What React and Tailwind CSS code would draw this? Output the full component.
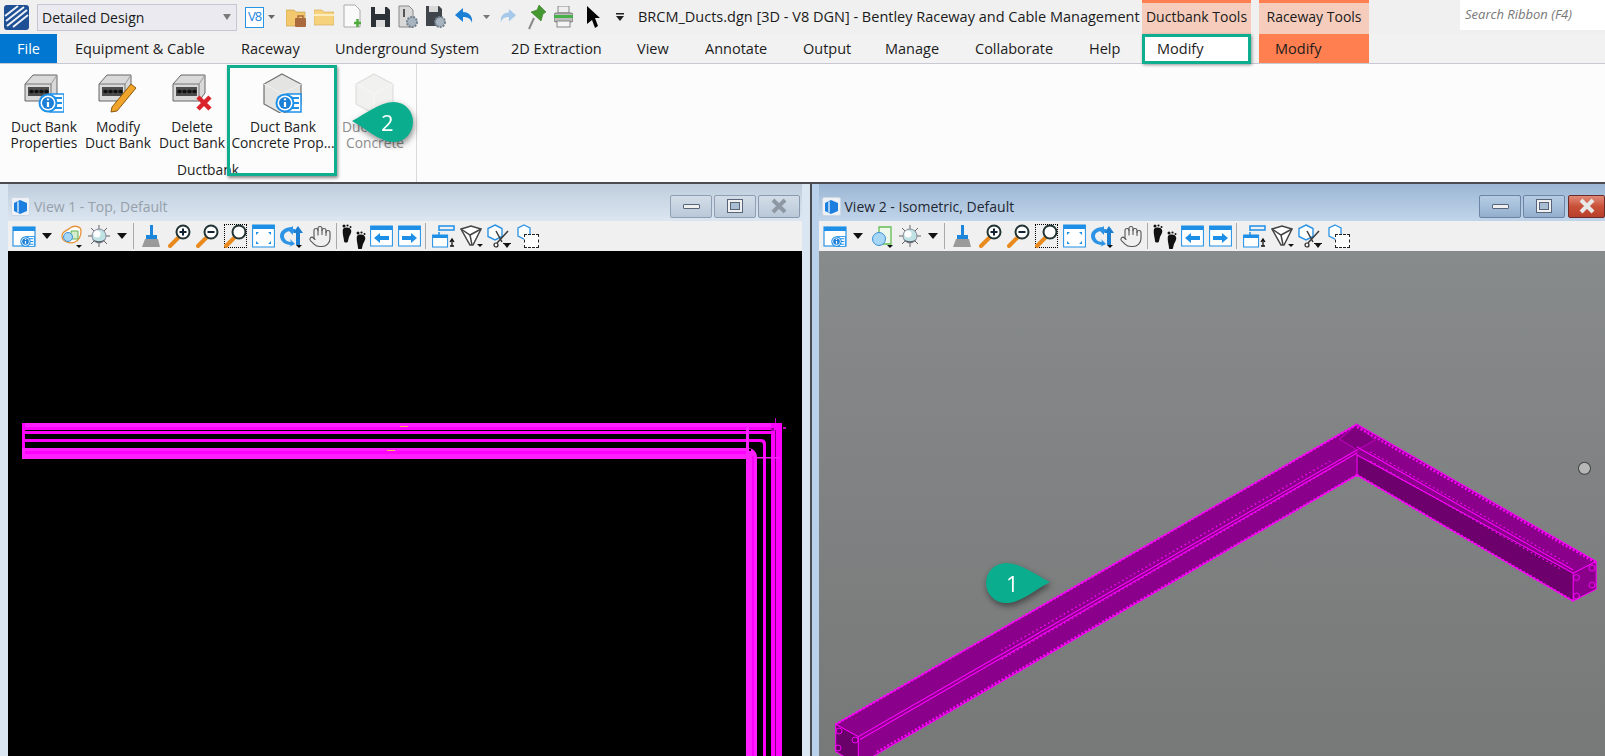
import { Hand } from 'lucide-react';

const font = "font-['Open_Sans','Noto_Sans',sans-serif]";

const S = ({ c, vb = '0 0 24 24', children }) => (
  <svg className={`shrink-0 ${c}`} viewBox={vb}>{children}</svg>
);

const Arrow = ({ c, fill = '#111' }) => (
  <S c={`h-[8px] ${c}`} vb="0 0 10 6"><path d="M0 0h10L5 6z" fill={fill} /></S>
);

const Sep = ({ c }) => <div className={`h-[26px] w-px shrink-0 bg-[#a9a9a9] ${c}`} />;

const InfoBadge = ({ x = 0, y = 0 }) => (
  <g transform={`translate(${x} ${y})`}>
    <rect x="12" y="1" width="14" height="18" fill="#fff" stroke="#1e90e8" strokeWidth="1.5" />
    <path d="M17 5h7M17 10h7M17 15h7" stroke="#1e90e8" strokeWidth="2" />
    <circle cx="10" cy="10" r="9.5" fill="#1e90e8" />
    <circle cx="10" cy="10" r="7.5" fill="#fff" />
    <circle cx="10" cy="10" r="6" fill="#1d7fd6" />
    <path d="M10 5.5v1.8M10 9v5" stroke="#fff" strokeWidth="2.2" />
  </g>
);

const DuctBox = () => (
  <g>
    <path d="M1 11 9 2h24v18l-6 8H1z" fill="#d9d9d9" stroke="#666" strokeWidth="1" />
    <path d="M1 11h26v17" fill="none" stroke="#777" strokeWidth="1" />
    <path d="M27 11l6-9" stroke="#999" strokeWidth="1" />
    <rect x="4" y="14" width="21" height="9" fill="#4c4c4c" />
    <path d="M7 18.500h1M12 18.500h1M17 18.500h1M22 18.500h1" stroke="#111" strokeWidth="3.500" strokeLinecap="round" />
  </g>
);

const Hexagon = ({ light }) => (
  <g opacity={light ? 0.45 : 1}>
    <path d="M19 1 38 11v20L19 41 1 31V11z" fill="#e4e4e2" stroke={light ? '#bbb' : '#6f6f6f'} strokeWidth="1.200" />
    <path d="M1 11l18 10 19-10M19 21v20" fill="none" stroke="#f2f2f2" strokeWidth="1" />
  </g>
);

const RibbonBtn = ({ c, icon, lines, muted }) => (
  <div className={`flex shrink-0 flex-col items-center ${c}`}>
    <div className="h-[40px] w-[40px]">{icon}</div>
    <div className={`mt-[6px] whitespace-nowrap text-center text-[13.8px] leading-[16px] ${muted ? 'text-[#8d8d8d]' : 'text-[#1c1c1c]'}`}>
      <div>{lines[0]}</div>
      <div>{lines[1]}</div>
    </div>
  </div>
);

const tabs = [
  ['Equipment & Cable', 'w-[166px]'],
  ['Raceway', 'w-[94px]'],
  ['Underground System', 'w-[176px]'],
  ['2D Extraction', 'w-[126px]'],
  ['View', 'w-[68px]'],
  ['Annotate', 'w-[98px]'],
  ['Output', 'w-[82px]'],
  ['Manage', 'w-[90px]'],
  ['Collaborate', 'w-[114px]'],
  ['Help', 'w-[71px]'],
];

const WinBtn = ({ active, kind, c }) => {
  if (kind === 'close') {
    return (
      <div className={`flex h-[23px] shrink-0 items-center justify-center rounded-[2px] border ${active ? 'border-[#6d2a2a] bg-gradient-to-b from-[#e08a78] via-[#c95038] to-[#b8402a]' : 'border-[#8a9bb0] bg-gradient-to-b from-[#d3dde8] to-[#b9c8d8]'} ${c}`}>
        <svg className="h-[16px] w-[18px]" viewBox="0 0 18 16">
          <path d="M3 2l12 12M15 2 3 14" stroke={active ? '#e8e8e8' : '#8e98a3'} strokeWidth="4" />
        </svg>
      </div>
    );
  }
  return (
    <div className={`flex h-[23px] w-[42px] shrink-0 items-center justify-center rounded-[2px] border ${active ? 'border-[#6d85a5] bg-gradient-to-b from-[#b6cce3] via-[#a5bfdb] to-[#93aecb]' : 'border-[#8fa0b4] bg-gradient-to-b from-[#d3dde8] to-[#b9c8d8]'} ${c}`}>
      {kind === 'min' ? (
        <div className="h-[5px] w-[17px] rounded-[1px] border border-[#56657a] bg-[#f0f0f0]" />
      ) : (
        <div className="h-[14px] w-[16px] border border-[#56657a] bg-[#f0f0f0] p-[2px]"><div className="h-full w-full border border-[#56657a] bg-[#a9bdd3]" /></div>
      )}
    </div>
  );
};

const Zoom = ({ c, mark }) => (
  <S c={`h-[24px] w-[23px] ${c}`} vb="0 0 23 24">
    <path d="M2 22 10 14" stroke="#e88a1e" strokeWidth="4" strokeLinecap="round" />
    <circle cx="15" cy="8" r="6.500" fill="#fff" stroke="#233" strokeWidth="2" />
    {mark === 'plus' && <path d="M11.500 8h7M15 4.500v7" stroke="#123" strokeWidth="2" />}
    {mark === 'minus' && <path d="M11.500 8h7" stroke="#123" strokeWidth="2" />}
  </S>
);

const WinIcon = () => (
  <>
    <rect x="1" y="3" width="22" height="19" fill="#fff" stroke="#2b93e4" strokeWidth="1.200" />
    <rect x="1" y="3" width="22" height="4" fill="#1d8fe6" />
  </>
);

const Foot = ({ x, y, s = 1 }) => (
  <g transform={`translate(${x} ${y}) scale(${s})`} fill="#111">
    <path d="M2 5c2-2 7-2 8 1 1 2-1 5-2 7l-1 4c0 2-4 2-4 0 0-3-2-8-1-12z" />
    <circle cx="3" cy="2" r="1.500" />
    <circle cx="6.500" cy="1.500" r="1.100" />
    <circle cx="9.500" cy="3" r="1" />
  </g>
);

const ViewToolbar = ({ second }) => (
  <div className="flex h-[30px] items-center bg-[#f0f0f0] pl-[4px]">
    <S c="h-[24px] w-[24px]"><WinIcon /><g transform="translate(8 12) scale(.55)"><InfoBadge /></g></S>
    <Arrow c="ml-[6px] w-[10px]" />
    <S c="ml-[7px] h-[24px] w-[24px]">
      {second ? (
        <>
          <path d="M9 3h12v17H9z" fill="#eef8ea" stroke="#66bb55" strokeWidth="1.300" />
          <circle cx="9" cy="15" r="6.500" fill="#a8d6f5" stroke="#3c93d8" />
        </>
      ) : (
        <>
          <path d="M3 12c0-5 5-5 8-8 4-3 11-2 11 3 0 6-2 9-6 11-5 2-13 0-13-6z" fill="#fff" stroke="#e8923a" strokeWidth="1.300" />
          <path d="M12 7h7v8h-7z" fill="#d5eecd" stroke="#65b353" />
          <circle cx="9" cy="13" r="4.500" fill="#a8d6f5" stroke="#3c93d8" />
        </>
      )}
      <path d="M17 21h6l-3 3z" fill="#111" />
    </S>
    <S c="ml-[4px] h-[24px] w-[24px]">
      <path d="M12 1v22M1 12h22M4 4l16 16M20 4 4 20" stroke="#666" strokeWidth="1" />
      <circle cx="12" cy="12" r="7" fill="#bfe3e4" stroke="#889" />
      <circle cx="10" cy="10" r="3.500" fill="#fff" />
      <path d="M6 15c3 3 9 3 12 0-2 5-10 5-12 0z" fill="#565a66" />
    </S>
    <Arrow c="ml-[6px] w-[10px]" />
    <Sep c="ml-[6px]" />
    <S c="ml-[7px] h-[24px] w-[20px]" vb="0 0 20 24">
      <path d="M9 1h3v10h4v4H5v-4h4z" fill="#1c85dc" />
      <path d="M4 15h13l2 8H1z" fill="#9a9a9a" />
    </S>
    <Zoom c="ml-[7px]" mark="plus" />
    <Zoom c="ml-[5px]" mark="minus" />
    <div className="relative ml-[5px] h-[24px] w-[23px] shrink-0 border border-dotted border-black">
      <Zoom c="-ml-px -mt-px" />
    </div>
    <S c="ml-[5px] h-[24px] w-[23px]" vb="0 0 23 24">
      <rect x=".6" y="1" width="21.800" height="22" fill="#fff" stroke="#1d8fe6" />
      <rect x=".6" y="1" width="21.800" height="4" fill="#1d8fe6" />
      <path d="M4 8h3L4 11zM19 8h-3l3 3zM4 20h3l-3-3zM19 20h-3l3-3z" fill="#1d8fe6" />
    </S>
    <S c="ml-[4px] h-[24px] w-[24px]">
      <path d="M13 3C6 3 1 7 1 12c0 5 5 9 11 9l-2 2 6-3-5-5 1 3c-4 0-7-3-7-6s3-5 8-5z" fill="#2c93e6" />
      <path d="M9 6l5-4v3h2v3h-2v3z" fill="#2c93e6" />
      <path d="M19 2l5 7h-3v12h-4V9h-3z" fill="#1c7fd2" />
      <path d="M17 21h6l-3 3z" fill="#111" />
    </S>
    <Hand className="ml-[5px] h-[25px] w-[24px] -mr-[2px] shrink-0 text-[#555]" strokeWidth={1.100} />
    <Sep c="ml-[6px]" />
    <S c="ml-[4px] h-[26px] w-[25px]" vb="0 0 25 26">
      <Foot x="0" y="1" s="1" />
      <Foot x="14" y="8" s="1" />
    </S>
    <S c="ml-[4px] h-[24px] w-[23px]" vb="0 0 23 24">
      <rect x=".6" y="2" width="21.800" height="20" fill="#fff" stroke="#1d8fe6" />
      <rect x=".6" y="2" width="21.800" height="4" fill="#1d8fe6" />
      <path d="M4 14l6-5v3h9v4h-9v3z" fill="#1d8fe6" />
    </S>
    <S c="ml-[5px] h-[24px] w-[23px]" vb="0 0 23 24">
      <rect x=".6" y="2" width="21.800" height="20" fill="#fff" stroke="#1d8fe6" />
      <rect x=".6" y="2" width="21.800" height="4" fill="#1d8fe6" />
      <path d="M19 14l-6-5v3H4v4h9v3z" fill="#1d8fe6" />
    </S>
    <Sep c="ml-[4px]" />
    <S c="ml-[6px] h-[24px] w-[23px]" vb="0 0 23 24">
      <path d="M7 7V2h15v4H7zM7 8v3" fill="none" stroke="#1d8fe6" strokeWidth="1.500" />
      <rect x=".6" y="11" width="15" height="12" fill="#fff" stroke="#1d8fe6" />
      <rect x=".6" y="11" width="15" height="3" fill="#1d8fe6" />
      <path d="M18 22h4M20 22v-6M18 18l2-3 2 3" stroke="#111" fill="none" strokeWidth="1.300" />
    </S>
    <S c="ml-[5px] h-[24px] w-[24px]">
      <path d="M1 5l10-3 10 3-8 16h-3z" fill="#fff" stroke="#444" strokeWidth="1.500" />
      <path d="M1 5l9 6 11-6M10 11l2 10" fill="none" stroke="#444" strokeWidth="1.500" />
      <path d="M17 20h6l-3 3z" fill="#111" />
    </S>
    <S c="ml-[3px] h-[24px] w-[25px]" vb="0 0 25 24">
      <path d="M8 1l7 3.500v8L8 16l-7-3.500v-8z" fill="#fff" stroke="#2b93e4" strokeWidth="1.400" />
      <path d="M9 7l6 11M21 7 10 19" stroke="#3a3a3a" strokeWidth="1.500" fill="none" />
      <circle cx="9" cy="21" r="2" fill="#fff" stroke="#222" strokeWidth="1.200" />
      <path d="M16 19h8v1h-1l-3 4-3-4h-1z" fill="#111" />
    </S>
    <div className="relative ml-[4px] h-[24px] w-[23px] shrink-0">
      <S c="h-[16px] w-[16px]" vb="0 0 16 16"><path d="M8 1l6 3v8l-6 3-6-3V4z" fill="#fff" stroke="#2b93e4" strokeWidth="1.300" /></S>
      <div className="absolute bottom-0 right-0 h-[14px] w-[15px] border border-dashed border-[#222] bg-white" />
    </div>
  </div>
);

const View1Drawing = () => (
  <svg className="h-full w-full" viewBox="8 251 794 505" preserveAspectRatio="none">
    <rect x="8" y="251" width="794" height="505" fill="#000" />
    <g fill="#ff00ff">
      <rect x="22" y="423" width="760" height="7" fill="#ff20ff" />
      <rect x="25" y="427" width="757" height="3" />
      <rect x="25" y="431" width="746" height="3" />
      <path d="M25 439h736c3 0 5 2 5 5v312h-3V445c0-2-1-3-3-3H25z" />
      <rect x="22" y="423" width="3" height="36" />
      <path d="M22 448h726c5 0 9 4 9 9v299h-11V459H22z" fill="#ff20ff" />
      <rect x="25" y="451" width="721" height="3" />
      <rect x="752" y="456" width="2" height="300" />
      <rect x="771" y="423" width="4" height="333" />
      <rect x="775.500" y="423" width="6.500" height="333" />
      <rect x="746" y="423" width="3" height="26" fill="#ff20ff" />
      <rect x="757" y="457" width="23" height="1.500" fill="#ff20ff" />
    </g>
    <rect x="749" y="449" width="2" height="2" fill="#000" />
    <rect x="771" y="428" width="3" height="3" fill="#99009f" />
    <rect x="775" y="418" width="1" height="5" fill="#c000c0" />
    <rect x="783" y="427" width="3" height="2" fill="#c000c0" />
    <rect x="400" y="426" width="8" height="1" fill="#ffb060" />
    <rect x="387" y="450" width="8" height="1" fill="#ffb060" />
  </svg>
);

const View2Drawing = () => (
  <svg className="h-full w-full" viewBox="819 251 786 505" preserveAspectRatio="none">
    <polygon points="1356.700,424.300 835.700,724.300 858.300,736.700 1356.700,450" fill="#8a008a" />
    <polygon points="1356.700,450 858.300,736.700 858.300,765 1356.700,475" fill="#8a008a" />
    <polygon points="835.700,724.300 858.300,736.700 858.300,765 835.700,751.700" fill="#6a006a" />
    <polygon points="1356.700,424.300 1595.700,561.300 1572.700,573.300 1356.700,455 1356.700,450" fill="#8a008a" />
    <polygon points="1356.700,455 1572.700,573.300 1572.700,601 1356.700,475" fill="#6e006e" />
    <polygon points="1572.700,573.300 1595.700,561.300 1595.700,589.300 1572.700,601" fill="#8a008a" />
    <polygon points="1356.700,424.300 1375,440 1356.700,450 1339.300,439.300" fill="#7d007d" />
    <g fill="none" stroke="#ff00ff" strokeWidth="1">
      <path d="M1356.700 424.300 835.700 724.300 858.300 736.700 1356.700 450M858.300 736.700V765M835.700 724.300V751.700L858.300 765 1356.700 475" />
      <path d="M1356.700 424.300 1595.700 561.300 1572.700 573.300 1356.700 455M1356.700 455V475L1572.700 601 1595.700 589.300V561.300M1572.700 573.300V601" />
      <path d="M1356.700 424.300 1375 440 1356.700 450 1339.300 439.300zM1356.700 450V455" stroke="#d600d6" strokeWidth=".8" />
      <path d="M1356.700 453 860 739.500M1356.700 447 1572.700 570" />
    </g>
    <g fill="none" stroke="#ff00ff" strokeWidth="2.200" strokeDasharray="2 2">
      <path d="M1356.700 424.300 835.700 724.300M1356.700 427 1595.700 563M1356.700 475 1572.700 601M1356.700 475 875 753" />
      <path d="M1330 469 1000 660M1330 461 1000 651" strokeWidth="1.400" strokeDasharray="1.500 3" />
      <path d="M1370 461 1560 569M1370 452 1570 565" strokeWidth="1.200" strokeDasharray="1.500 3" />
    </g>
    <g fill="none" stroke="#ff00ff" strokeWidth=".9">
      <circle cx="1591.500" cy="568" r="3" /><circle cx="1591.500" cy="585" r="3" /><circle cx="1576" cy="577.500" r="3" /><circle cx="1576" cy="596" r="3" />
      <circle cx="839" cy="731" r="3" /><circle cx="855" cy="740" r="3" /><circle cx="838" cy="748" r="3" />
    </g>
    <circle cx="1584" cy="468.300" r="6" fill="#b7b7b7" stroke="#3f4444" strokeWidth="1" />
  </svg>
);

const ViewWindow = ({ active, title, c, frame, children }) => (
  <div className={`flex h-full shrink-0 flex-col ${c}`}>
    <div className={`flex h-[37px] items-center pt-[7px] ${active ? 'bg-gradient-to-b from-[#9bb6d4] to-[#c1d5ea]' : 'bg-gradient-to-b from-[#bfcddc] to-[#dbe6f1]'}`}>
      <svg className="ml-[3px] h-[19px] w-[19px] shrink-0" viewBox="0 0 19 19">
        <rect x=".5" y=".5" width="18" height="18" rx="2" fill="#eef2f7" stroke="#cfd8e2" />
        <path d="M3 6l6-3 7 3v8l-7 3-6-3z" fill="#1c7fe0" />
        <path d="M7 4.500v11" stroke="#cfe6fb" strokeWidth="1.500" />
      </svg>
      <span className={`ml-[4px] whitespace-nowrap text-[14px] ${active ? 'text-[#1f2733]' : 'text-[#96a0aa]'}`}>{title}</span>
      <div className={`ml-auto flex items-center ${active ? 'mr-0' : 'mr-[2px]'}`}>
        <WinBtn active={active} kind="min" />
        <WinBtn active={active} kind="max" c="ml-[2px]" />
        <WinBtn active={active} kind="close" c={active ? 'ml-[3px] w-[37px]' : 'ml-[2px] w-[42px]'} />
      </div>
    </div>
    <ViewToolbar second={active} />
    <div className={`min-h-0 flex-1 ${frame}`}>{children}</div>
  </div>
);

const Callout = ({ c, flip, n, numC }) => (
  <div className={`absolute h-[40px] drop-shadow-[1px_3px_3px_rgba(0,0,0,0.45)] ${c}`}>
    <svg className={`h-full w-full ${flip ? '-scale-x-100' : ''}`} viewBox="0 0 64 40" preserveAspectRatio="none">
      <path d="M20 0C35 0 50 12 64 19 50 26 35 40 20 40A20 20 0 0 1 20 0Z" fill="#0aae8e" />
    </svg>
    <span className={`absolute top-[6px] text-[22px] leading-[28px] text-white ${numC}`}>{n}</span>
  </div>
);

export default function App() {
  return (
    <div className={`relative h-[756px] w-[1605px] overflow-hidden bg-[#f0f0f0] ${font}`}>
      {/* title row */}
      <div className="flex h-[34px] items-center bg-[#f0f0f0] text-[#1a1a1a]">
        <svg className="ml-[4px] h-[25px] w-[25px] shrink-0" viewBox="0 0 25 25">
          <rect width="25" height="25" rx="3" fill="#1f4f95" />
          <path d="M1 11 14 1M2 16 20 2M3 21 23 5M9 22 24 10" stroke="#eef2f8" strokeWidth="2" />
        </svg>
        <div className="ml-[8px] flex h-[27px] w-[200px] shrink-0 items-center border border-[#c6c6d4] bg-[#eaeaf0] pl-[4px] pr-[5px] text-[14px]">
          Detailed Design
          <svg className="ml-auto h-[6px] w-[8px]" viewBox="0 0 8 6"><path d="M0 0h8L4 6z" fill="#7a7a7a" /></svg>
        </div>
        <div className="ml-[8px] flex h-[21px] w-[19px] shrink-0 items-center justify-center border border-[#2b93e4] bg-white text-[13px] tracking-[-1px] text-[#1c85dc]">V8</div>
        <Arrow c="ml-[4px] w-[7px]" fill="#666" />
        <S c="ml-[11px] h-[24px] w-[21px]" vb="0 0 21 24">
          <path d="M0 5h8l2 2h9v14H0z" fill="#f3c86c" stroke="#c39a44" strokeWidth=".6" />
          <rect x="9" y="13" width="11" height="9" rx="1" fill="#a96a3e" />
          <path d="M12 13v-2h5v2" fill="none" stroke="#a96a3e" strokeWidth="1.500" />
        </S>
        <S c="ml-[7px] h-[24px] w-[20px]" vb="0 0 20 24">
          <path d="M0 5h8l2 2h10v13H0z" fill="#f7d27d" stroke="#cca44e" strokeWidth=".6" />
          <path d="M0 10h20" stroke="#fdecbd" strokeWidth="2" />
        </S>
        <S c="ml-[9px] h-[26px] w-[19px]" vb="0 0 19 26">
          <path d="M1 1h11l5 5v17H1z" fill="#fafafa" stroke="#aaa" />
          <path d="M11 19h7M14.500 15v8" stroke="#4faa3c" strokeWidth="2.500" />
        </S>
        <S c="ml-[9px] h-[22px] w-[19px]" vb="0 0 19 22">
          <path d="M0 1h16l3 3v17H0z" fill="#2c3138" />
          <rect x="4" y="1" width="10" height="7" fill="#eee" />
          <rect x="5" y="14" width="9" height="7" fill="#ddd" />
        </S>
        <S c="ml-[8px] h-[24px] w-[20px]" vb="0 0 20 24">
          <path d="M1 1h10l4 4v17H1z" fill="#d8d8d8" stroke="#888" />
          <path d="M6 4v8" stroke="#555" strokeWidth="2" />
          <circle cx="14" cy="17" r="5" fill="#a8b4bf" stroke="#71808c" strokeWidth="2" strokeDasharray="2 1" />
        </S>
        <S c="ml-[8px] h-[24px] w-[20px]" vb="0 0 20 24">
          <path d="M0 1h13l3 3v17H0z" fill="#40454c" />
          <rect x="3" y="1" width="9" height="6" fill="#d9d9d9" />
          <circle cx="14" cy="17" r="5" fill="#a8b4bf" stroke="#71808c" strokeWidth="2" strokeDasharray="2 1" />
        </S>
        <S c="ml-[9px] h-[18px] w-[18px]" vb="0 0 18 18">
          <path d="M0 7 8 0v4c6 0 10 4 9 11-1-4-4-6-9-6v5z" fill="#1c7fd6" />
        </S>
        <Arrow c="ml-[10px] w-[7px]" fill="#777" />
        <S c="ml-[10px] h-[16px] w-[16px]" vb="0 0 18 18">
          <path d="M18 7 10 0v4C4 4 0 8 1 15c1-4 4-6 9-6v5z" fill="#a6c8ea" />
        </S>
        <S c="ml-[12px] h-[25px] w-[18px]" vb="0 0 18 25">
          <path d="M11 0l7 7-3 2-2 7L3 7l6-2z" fill="#43992f" stroke="#2d6d20" strokeWidth=".5" />
          <path d="M6 13 1 24" stroke="#8a8a8a" strokeWidth="2" />
        </S>
        <S c="ml-[8px] h-[22px] w-[19px]" vb="0 0 19 22">
          <rect x="4" y="0" width="11" height="7" fill="#eee" stroke="#888" />
          <rect x="0" y="7" width="19" height="9" rx="2" fill="#bdbdbd" stroke="#777" />
          <rect x="0" y="9" width="19" height="3" fill="#48b048" />
          <rect x="3" y="15" width="13" height="6" fill="#f5f5f5" stroke="#888" />
        </S>
        <S c="ml-[14px] h-[22px] w-[13px]" vb="0 0 13 22">
          <path d="M0 0l13 12H8l3 8-3 2-3-8-5 4z" fill="#050505" />
        </S>
        <S c="ml-[16px] h-[8px] w-[8px]" vb="0 0 8 8">
          <path d="M0 0h8v1.500H0zM0 3h8L4 8z" fill="#222" />
        </S>
        <span className="ml-[14px] whitespace-nowrap text-[14.5px]">BRCM_Ducts.dgn [3D - V8 DGN] - Bentley Raceway and Cable Management</span>
        <div className="absolute left-[1142px] top-0 flex h-[34px] w-[109px] items-center justify-center border-t-[3px] border-[#ff7f50] bg-[#f6cdbd] pb-[5px] text-[14px]">Ductbank Tools</div>
        <div className="absolute left-[1259px] top-0 flex h-[34px] w-[110px] items-center justify-center border-t-[3px] border-[#ff7f50] bg-[#f6cdbd] pb-[5px] text-[14px]">Raceway Tools</div>
        <div className="absolute left-[1460px] top-0 flex h-[30px] w-[145px] items-center bg-white pl-[5px] text-[13px] italic text-[#777]">Search Ribbon (F4)</div>
      </div>

      {/* tab row */}
      <div className="flex h-[30px] items-stretch border-b border-[#c9c9d6] bg-[#f2f2f2] text-[14.5px] text-[#1c1c1c]">
        <div className="flex w-[57px] shrink-0 items-center justify-center bg-[#0177d1] text-white">File</div>
        {tabs.map(([name, w]) => (
          <div key={name} className={`flex shrink-0 items-center whitespace-nowrap pl-[18px] ${w}`}>{name}</div>
        ))}
        <div className="z-10 flex h-[30px] w-[109px] shrink-0 items-center border-[3px] border-[#0fae8e] bg-white pl-[12px] shadow-[1px_1px_3px_rgba(0,0,0,0.4)]">Modify</div>
        <div className="ml-[8px] flex w-[110px] shrink-0 items-center bg-[#ff7f50] pl-[16px]">Modify</div>
      </div>

      {/* ribbon */}
      <div className="flex h-[118px] bg-[#fcfcfc]">
        <div className="flex w-[417px] shrink-0 flex-col border-r border-[#d9d9d9] pb-[4px] pl-[7px] pt-[9px]">
          <div className="flex">
            <RibbonBtn c="w-[74px]" lines={['Duct Bank', 'Properties']} icon={
              <svg viewBox="0 0 40 40"><DuctBox /><InfoBadge x="14" y="20" /></svg>
            } />
            <RibbonBtn c="w-[74px]" lines={['Modify', 'Duct Bank']} icon={
              <svg viewBox="0 0 40 40">
                <DuctBox />
                <path d="M14 34 33 11l5 4-19 23-6 1z" fill="#f0a52a" stroke="#8a5a10" strokeWidth="1" />
              </svg>
            } />
            <RibbonBtn c="w-[74px]" lines={['Delete', 'Duct Bank']} icon={
              <svg viewBox="0 0 40 40">
                <DuctBox />
                <path d="M26 24l12 12M38 24 26 36" stroke="#d8242a" strokeWidth="4.500" />
              </svg>
            } />
            <RibbonBtn c="w-[108px]" lines={['Duct Bank', 'Concrete Prop...']} icon={
              <svg viewBox="0 0 40 40"><Hexagon /><InfoBadge x="12" y="20" /></svg>
            } />
            <RibbonBtn c="w-[76px]" muted lines={['Duct Bank', 'Concrete']} icon={
              <svg viewBox="0 0 40 40"><Hexagon light /></svg>
            } />
          </div>
          <div className="mt-auto pr-[7px] text-center text-[13.8px] leading-[16px] text-[#1c1c1c]">Ductbank</div>
        </div>
      </div>

      {/* views */}
      <div className="h-[2px] bg-[#4b4b50]" />
      <div className="flex h-[572px] bg-[#dae6f2]">
        <ViewWindow title="View 1 - Top, Default" c="w-[810px] border-x-[8px] border-[#dae6f2]" frame="bg-black">
          <View1Drawing />
        </ViewWindow>
        <div className="h-full w-[1.500px] shrink-0 bg-[#4b4b50]" />
        <ViewWindow active title="View 2 - Isometric, Default" c="w-[793.500px] border-l-[7.500px] border-[#b9d1ea]" frame="bg-gradient-to-b from-[#888b8b] to-[#777979]">
          <View2Drawing />
        </ViewWindow>
      </div>

      {/* overlays */}
      <div className="absolute left-[227px] top-[65px] h-[111px] w-[110px] border-[3px] border-[#0fae8e] shadow-[1px_2px_3px_rgba(0,0,0,0.45)]" />
      <Callout c="left-[352px] top-[102px] w-[61px]" flip n="2" numC="left-[29px]" />
      <Callout c="left-[986px] top-[563px] w-[64px]" n="1" numC="left-[20px]" />
    </div>
  );
}
